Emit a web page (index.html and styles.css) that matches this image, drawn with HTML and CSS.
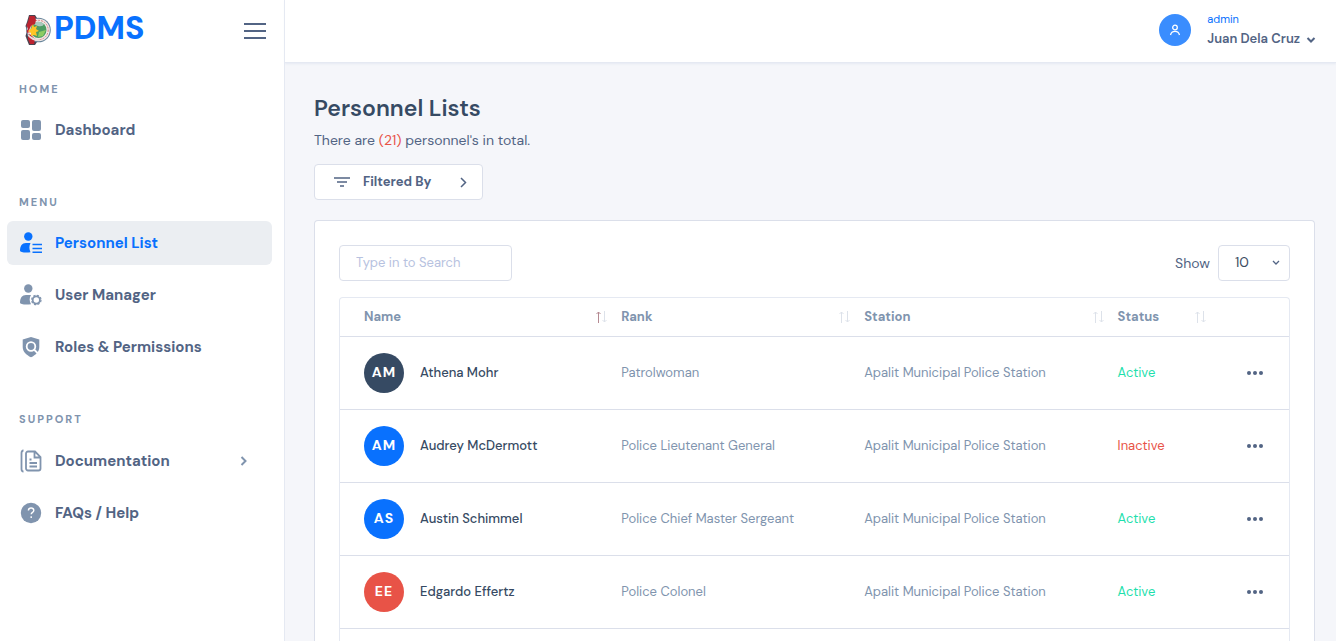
FILE: index.html
```html
<!DOCTYPE html>
<html lang="en">
<head>
<meta charset="utf-8">
<title>PDMS - Personnel Lists</title>
<link rel="stylesheet" href="styles.css">
</head>
<body>
<div class="app">
  <aside class="sidebar">
    <div class="brand-bar">
      <a class="brand" href="#">
        <svg class="seal" width="26" height="32" viewBox="0 0 26 32" aria-hidden="true">
          <path d="M4 1h6l2 3v24l-2 3H4l-2-5-1.500-4L2 17l-1.500-5L2 8z" fill="#4a4450"/>
          <circle cx="13.500" cy="16" r="12.300" fill="#68859b"/>
          <circle cx="13.500" cy="16" r="11.300" fill="#f1e9e6"/>
          <circle cx="13.500" cy="16" r="9.700" fill="none" stroke="#d98382" stroke-dasharray="2 1"/>
          <circle cx="13.500" cy="16" r="8" fill="#4d9c62"/>
          <path d="M8 10q5-5 11 0-1 3-6 2z" fill="#a9c9bd"/>
          <path d="M14 18l7-2-3 6-5 1z" fill="#8dcc62"/>
          <path d="M4.500 2h5L11 6l-1 4-4 2-2 4-1 4-1.500-3L3 15l-1.500-4L3 8z" fill="#bd2430"/>
          <path d="M3 20l3 1 4 4-1 5H5l-2-5z" fill="#bd2430"/>
          <path d="M8 10l1 3 3-1-1 3 3 2-3 1 1 4-3-1-3 1v-3l-3-2 3-2z" fill="#ffc526"/>
          <path d="M3 20q5 5 11 5l-1 2Q7 27 3 22z" fill="#e8dddd"/>
        </svg>
        <span>PDMS</span>
      </a>
      <button class="menu-toggle" type="button" aria-label="Toggle menu">
        <svg width="24" height="20" viewBox="0 0 24 20"><path d="M1 3h22M1 10h22M1 17h22" stroke="#526484" stroke-width="2"/></svg>
      </button>
    </div>
    <nav class="nav">
      <h2 class="nav-heading">HOME</h2>
      <a class="nav-item" href="#">
        <svg class="nav-icon" viewBox="0 0 24 24"><rect x="2" y="2" width="9" height="8" rx="2"/><rect x="13" y="2" width="9" height="11" rx="2"/><rect x="2" y="12" width="9" height="10" rx="2"/><rect x="13" y="15" width="9" height="7" rx="2"/></svg>
        <span>Dashboard</span>
      </a>
      <h2 class="nav-heading">MENU</h2>
      <a class="nav-item active" href="#" aria-current="page">
        <svg class="nav-icon" viewBox="0 0 24 24"><circle cx="9.300" cy="5.500" r="4.200"/><path d="M1 19.500C1 15 3 12 7 12h4.500c-1.500 3-1.500 6 0 9.200C7 22 1 21.500 1 19.500z"/><path d="M13.500 13.500H23M13.500 17.500H23M13.500 21.200H23" stroke="currentColor" stroke-width="1.400"/></svg>
        <span>Personnel List</span>
      </a>
      <a class="nav-item" href="#">
        <svg class="nav-icon" viewBox="0 0 24 24"><circle cx="9.300" cy="5.500" r="4.200"/><path d="M1 19.500C1 15 3 12 7 12h5c-1.800 3-1.800 6 0 9.200C7 22 1 21.500 1 19.500z"/><circle cx="17.300" cy="17" r="3.600" fill="none" stroke="currentColor" stroke-width="1.800"/><circle cx="17.300" cy="17" r="4.700" fill="none" stroke="currentColor" stroke-width="1.200" stroke-dasharray="2.200 1.490"/></svg>
        <span>User Manager</span>
      </a>
      <a class="nav-item" href="#">
        <svg class="nav-icon" viewBox="0 0 24 24"><path d="M12 2 20.300 4.500V12c0 4.500-3.500 8-8.300 10.300C7.200 20 3.700 16.500 3.700 12V4.500z"/><circle cx="12" cy="11.500" r="4.300" fill="none" stroke="#fff" stroke-width="1.800"/><path d="m15 14.500 4.500 4.500" stroke="#fff" stroke-width="1.800"/></svg>
        <span>Roles &amp; Permissions</span>
      </a>
      <h2 class="nav-heading last">SUPPORT</h2>
      <a class="nav-item" href="#">
        <svg class="nav-icon line" viewBox="0 0 24 24"><path d="M4.500 1.500C3 1.500 2.500 2.500 2.500 4v16c0 1.500.5 2.500 2 2.500M9 2.500h7l5.500 5.500v11.500a2 2 0 0 1-2 2H9a2 2 0 0 1-2-2v-15a2 2 0 0 1 2-2zM15.500 3v5.500h5.500M10.500 10.500h2M10.500 14h7.500M10.500 17.500h7.500"/></svg>
        <span>Documentation</span>
        <svg class="nav-arrow" width="8" height="10" viewBox="0 0 8 10"><path d="m1.500 1 4 4-4 4"/></svg>
      </a>
      <a class="nav-item" href="#">
        <svg class="nav-icon" viewBox="0 0 24 24"><circle cx="12" cy="12" r="10.200"/><path d="M9.400 9.600c0-1.700 1.200-2.600 2.700-2.600s2.700.9 2.700 2.400c0 1.900-2.600 2-2.600 3.800M12.200 15.200v1.700" fill="none" stroke="#fff" stroke-width="1.400"/></svg>
        <span>FAQs / Help</span>
      </a>
    </nav>
  </aside>
  <div class="page">
    <header class="topbar">
      <button class="user" type="button">
        <span class="user-avatar"><svg width="12" height="12" viewBox="0 0 12 12"><circle cx="6" cy="3.500" r="2.300"/><path d="M1.500 11C2 8.500 3.500 7.300 6 7.300S10 8.500 10.500 11"/></svg></span>
        <span class="user-text">
          <span class="user-role">admin</span>
          <span class="user-name">Juan Dela Cruz <svg width="10" height="8" viewBox="0 0 10 8"><path d="m1.500 3 3.500 3.500L8.500 3"/></svg></span>
        </span>
      </button>
    </header>
    <main class="content">
      <h1 class="title">Personnel Lists</h1>
      <p class="summary">There are <span class="count">(21)</span> personnel's in total.</p>
      <button class="filter" type="button">
        <svg width="16" height="12" viewBox="0 0 16 12"><path d="M0 2h16M3 6h10M6 10h4"/></svg>
        <span>Filtered By</span>
        <svg class="filter-arrow" width="8" height="12" viewBox="0 0 8 12"><path d="m2 2 4.500 4.500L2 11"/></svg>
      </button>
      <section class="card">
        <div class="tools">
          <input class="search" type="search" placeholder="Type in to Search" aria-label="Search">
          <label class="show">Show
            <span class="select-box">
              <select><option>10</option></select>
              <svg width="8" height="6" viewBox="0 0 8 6"><path d="m1 1 3 3 3-3"/></svg>
            </span>
          </label>
        </div>
        <div class="table-wrap">
          <table>
            <colgroup><col class="c-name"><col class="c-rank"><col class="c-station"><col class="c-status"><col></colgroup>
            <thead>
              <tr>
                <th><div class="th">Name <svg width="12" height="12" viewBox="0 0 12 12"><path class="up" d="M3.500 12V1M1.500 3l2-2 2 2"/><path d="M9.500 0v11M7.500 9l2 2 2-2"/></svg></div></th>
                <th><div class="th">Rank <svg width="12" height="12" viewBox="0 0 12 12"><path d="M3.500 12V1M1.500 3l2-2 2 2"/><path d="M9.500 0v11M7.500 9l2 2 2-2"/></svg></div></th>
                <th><div class="th">Station <svg width="12" height="12" viewBox="0 0 12 12"><path d="M3.500 12V1M1.500 3l2-2 2 2"/><path d="M9.500 0v11M7.500 9l2 2 2-2"/></svg></div></th>
                <th><div class="th">Status <svg width="12" height="12" viewBox="0 0 12 12"><path d="M3.500 12V1M1.500 3l2-2 2 2"/><path d="M9.500 0v11M7.500 9l2 2 2-2"/></svg></div></th>
                <th></th>
              </tr>
            </thead>
            <tbody>
              <tr>
                <td><div class="person"><span class="avatar dark">AM</span>Athena Mohr</div></td>
                <td>Patrolwoman</td><td>Apalit Municipal Police Station</td><td class="ok">Active</td>
                <td><button class="more" type="button" aria-label="Actions"><svg width="16" height="4" viewBox="0 0 16 4"><circle cx="2" cy="2" r="2"/><circle cx="8" cy="2" r="2"/><circle cx="14" cy="2" r="2"/></svg></button></td>
              </tr>
              <tr>
                <td><div class="person"><span class="avatar">AM</span>Audrey McDermott</div></td>
                <td>Police Lieutenant General</td><td>Apalit Municipal Police Station</td><td class="off">Inactive</td>
                <td><button class="more" type="button" aria-label="Actions"><svg width="16" height="4" viewBox="0 0 16 4"><circle cx="2" cy="2" r="2"/><circle cx="8" cy="2" r="2"/><circle cx="14" cy="2" r="2"/></svg></button></td>
              </tr>
              <tr>
                <td><div class="person"><span class="avatar">AS</span>Austin Schimmel</div></td>
                <td>Police Chief Master Sergeant</td><td>Apalit Municipal Police Station</td><td class="ok">Active</td>
                <td><button class="more" type="button" aria-label="Actions"><svg width="16" height="4" viewBox="0 0 16 4"><circle cx="2" cy="2" r="2"/><circle cx="8" cy="2" r="2"/><circle cx="14" cy="2" r="2"/></svg></button></td>
              </tr>
              <tr>
                <td><div class="person"><span class="avatar red">EE</span>Edgardo Effertz</div></td>
                <td>Police Colonel</td><td>Apalit Municipal Police Station</td><td class="ok">Active</td>
                <td><button class="more" type="button" aria-label="Actions"><svg width="16" height="4" viewBox="0 0 16 4"><circle cx="2" cy="2" r="2"/><circle cx="8" cy="2" r="2"/><circle cx="14" cy="2" r="2"/></svg></button></td>
              </tr>
            </tbody>
          </table>
        </div>
      </section>
    </main>
  </div>
</div>
</body>
</html>
```
FILE: styles.css
```css
* { box-sizing: border-box; }
body {
  margin: 0;
  background: #f5f6fa;
  color: #526484;
  font: 400 13px/20px "DM Sans", Roboto, sans-serif;
}
button, input, select { font: inherit; color: inherit; }
button { border: 0; background: none; padding: 0; cursor: pointer; }
a { color: inherit; text-decoration: none; }
svg { display: block; flex: none; }
h1, h2, p { margin: 0; }

.app { display: flex; min-height: 100vh; }

.sidebar {
  flex: none;
  width: 285px;
  background: #fff;
  border-right: 1px solid #e5e9f2;
}
.brand-bar {
  display: flex;
  justify-content: space-between;
  align-items: center;
  height: 60px;
  padding: 0 17px 0 25px;
}
.brand {
  display: flex;
  align-items: center;
  gap: 3px;
  color: #0971fe;
  font-size: 32px;
  font-weight: 800;
  line-height: 32px;
}
.brand span { padding-bottom: 4px; }
.menu-toggle { padding-top: 2px; }
.nav { padding: 21px 12px 20px 7px; }
.nav-heading {
  margin: 42px 12px 11px;
  color: #8094ae;
  font-size: 11px;
  font-weight: 700;
  line-height: 16px;
  letter-spacing: 2px;
}
.nav-heading:first-child { margin-top: 0; }
.nav-heading.last { margin-bottom: 12px; }
.nav-item {
  display: flex;
  align-items: center;
  gap: 12px;
  height: 44px;
  padding: 0 24px 0 12px;
  border-radius: 6px;
  font-size: 15px;
  font-weight: 700;
}
.nav-item + .nav-item { margin-top: 8px; }
.nav-item.active { background: #ebeef2; color: #0971fe; }
.nav-icon { width: 24px; height: 24px; fill: currentColor; color: #8094ae; }
.active .nav-icon { color: #0971fe; }
.nav-icon.line { fill: none; stroke: currentColor; stroke-width: 1.8; }
.nav-arrow { margin-left: auto; fill: none; stroke: #8094ae; stroke-width: 2; }

.page { flex: 1; min-width: 0; display: flex; flex-direction: column; }
.topbar {
  display: flex;
  justify-content: flex-end;
  align-items: center;
  height: 63px;
  padding: 0 20px 2px;
  background: #fff;
  border-bottom: 1px solid #e5e9f2;
  box-shadow: 0 1px 2px #e5e9f2;
}
.user { display: flex; align-items: center; gap: 16px; text-align: left; }
.user-avatar {
  display: grid;
  place-items: center;
  width: 32px;
  height: 32px;
  border-radius: 50%;
  background: #3a8dfe;
}
.user-avatar svg { fill: none; stroke: #fff; stroke-width: 1.3; }
.user-text { display: block; }
.user-role { display: block; color: #0971fe; font-size: 11px; line-height: 16px; padding-bottom: 2px; }
.user-name { display: flex; align-items: center; gap: 6px; font-weight: 600; }
.user-name svg { fill: none; stroke: #526484; stroke-width: 2; }

.content { flex: 1; display: flex; flex-direction: column; padding: 30px 21px 0 29px; }
.title { color: #364a63; font-size: 23px; font-weight: 600; line-height: 30px; }
.summary { margin-top: 7px; font-size: 14px; }
.count { color: #e85347; }
.filter {
  display: flex;
  align-items: center;
  align-self: flex-start;
  gap: 13px;
  width: 169px;
  height: 36px;
  margin: 14px 0 20px;
  padding: 0 15px 0 19px;
  border: 1px solid #dbdfea;
  border-radius: 4px;
  background: #fff;
  font-weight: 700;
}
.filter svg { fill: none; stroke: #526484; stroke-width: 1.5; }
.filter .filter-arrow { margin-left: auto; }
.card {
  flex: 1;
  display: flex;
  flex-direction: column;
  padding: 24px 24px 0;
  border: 1px solid #dbdfea;
  border-bottom: 0;
  border-radius: 4px 4px 0 0;
  background: #fff;
}
.tools { display: flex; justify-content: space-between; align-items: center; margin-bottom: 16px; }
.search {
  width: 173px;
  height: 36px;
  padding: 0 16px 2px;
  border: 1px solid #dbdfea;
  border-radius: 4px;
  background: #fff;
  appearance: none;
}
.search::placeholder { color: #b7c2e0; }
.show { display: flex; align-items: center; gap: 8px; font-size: 14px; }
.select-box { display: grid; align-items: center; }
.select-box > * { grid-area: 1 / 1; }
.select-box select {
  width: 72px;
  height: 36px;
  padding: 0 16px 2px;
  border: 1px solid #dbdfea;
  border-radius: 4px;
  background: #fff;
  color: #3c4d62;
  font-size: 14px;
  appearance: none;
}
.select-box svg { justify-self: end; margin-right: 10px; fill: none; stroke: #526484; stroke-width: 1.3; pointer-events: none; }

.table-wrap { flex: 1; border: 1px solid #e5e9f2; border-bottom: 0; border-radius: 4px 4px 0 0; }
table { width: 100%; border-collapse: separate; border-spacing: 0; table-layout: fixed; }
.c-name { width: 28.8%; }
.c-rank { width: 25.6%; }
.c-station { width: 26.7%; }
.c-status { width: 10.8%; }
th, td { padding: 0 6px 0 8px; border-bottom: 1px solid #dbdfea; text-align: left; }
th:first-child, td:first-child { padding-left: 24px; }
th { height: 39px; color: #8094ae; font-weight: 700; }
td { height: 73px; color: #8094ae; }
.th { display: flex; align-items: center; justify-content: space-between; }
.th svg { fill: none; stroke: #dde2ea; stroke-width: 1; }
.th .up { stroke: #b58a92; }
.person { display: flex; align-items: center; gap: 16px; color: #364a63; font-weight: 500; }
.avatar {
  display: grid;
  place-items: center;
  width: 40px;
  height: 40px;
  border-radius: 50%;
  background: #0971fe;
  color: #fff;
  font-size: 14px;
  font-weight: 700;
  line-height: 20px;
  padding-bottom: 2px;
  letter-spacing: 1px;
}
.avatar.dark { background: #364a63; }
.avatar.red { background: #e85347; }
td.ok { color: #1ee0ac; }
td.off { color: #e85347; }
td:last-child { padding-right: 16px; }
.more { display: grid; place-items: center; width: 36px; height: 36px; margin-left: auto; }
.more svg { fill: #526484; }
```
